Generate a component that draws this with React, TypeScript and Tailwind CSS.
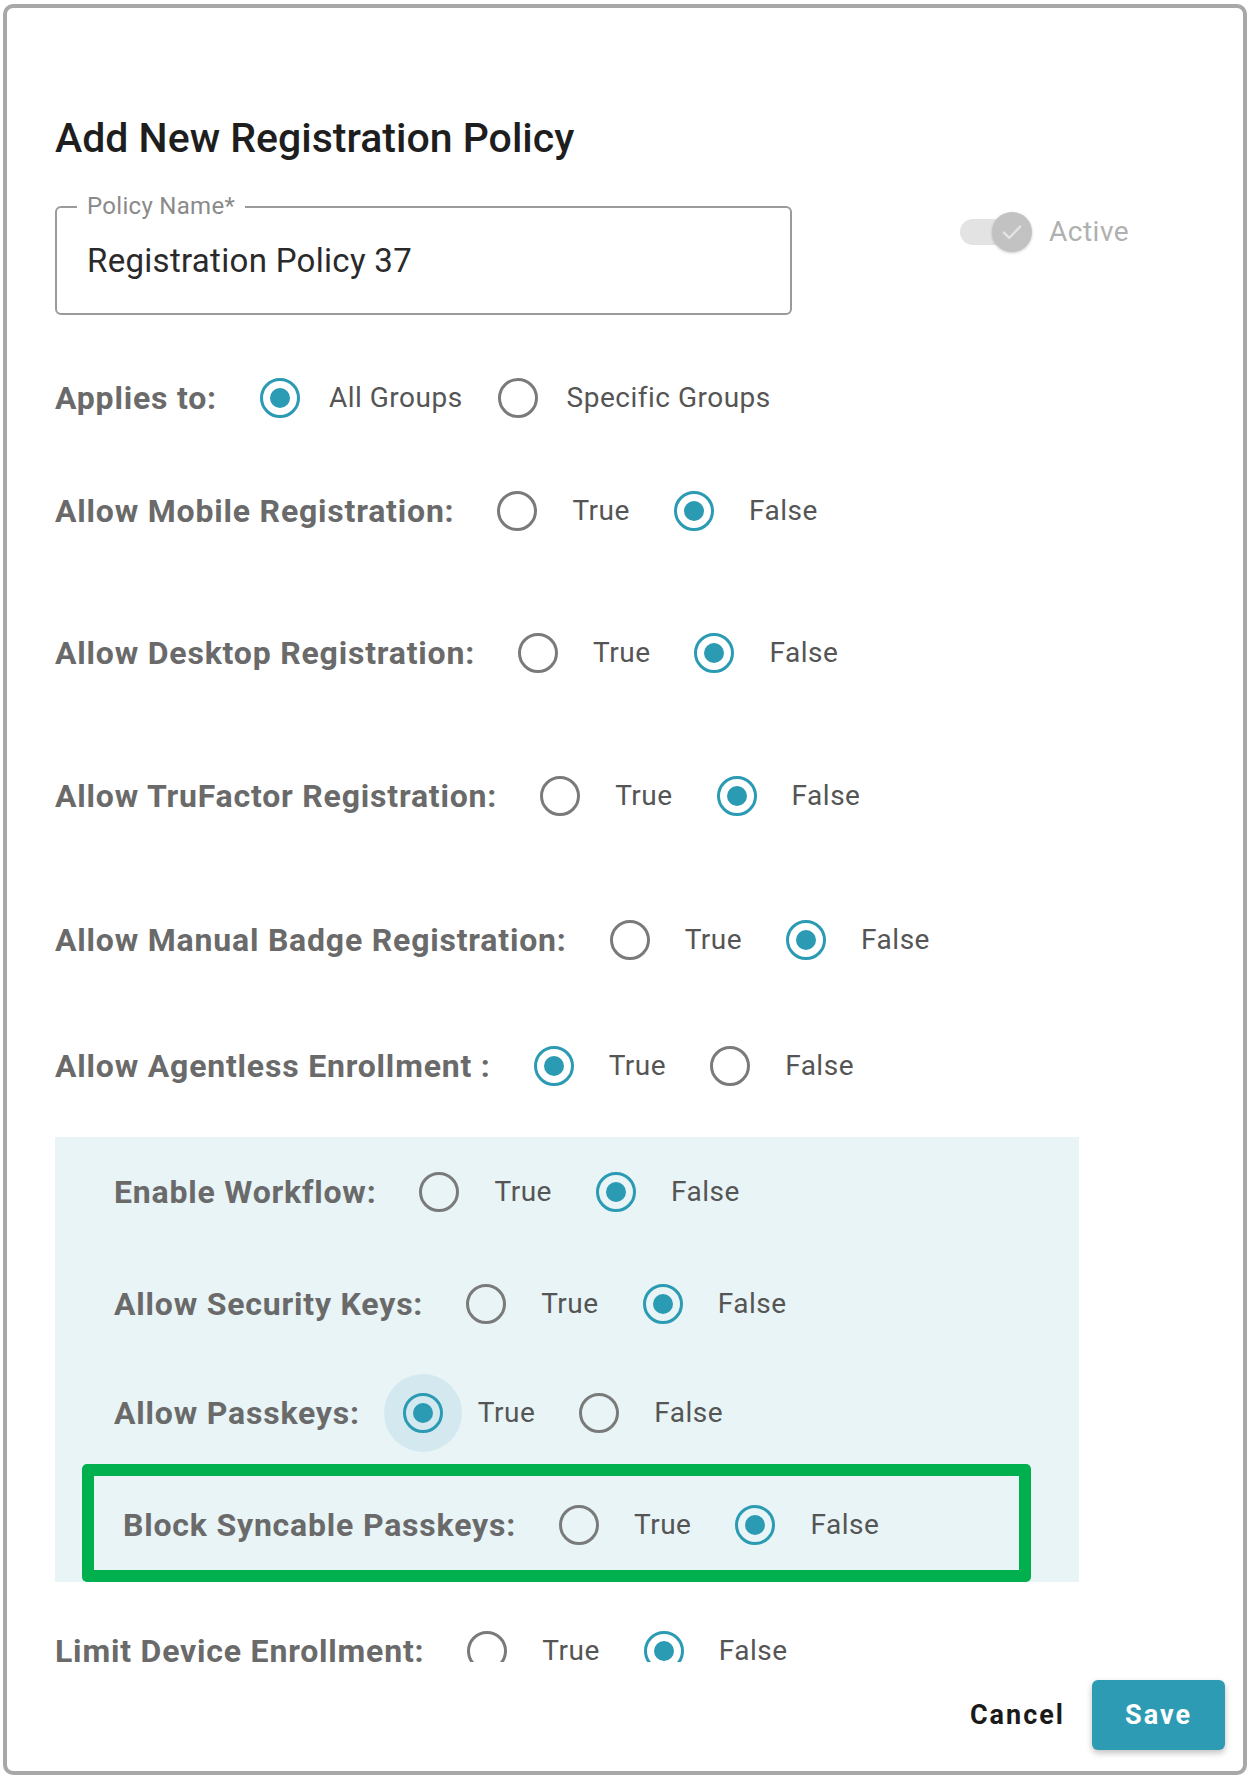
import React from "react";

const Radio = ({ checked, halo }: { checked: boolean; halo?: boolean }) => (
  <span className="relative flex items-center justify-center w-[40px] h-[40px] shrink-0">
    {halo && <span className="absolute -inset-[19px] rounded-full bg-[#d3e9ef]" />}
    <span
      className={`relative flex items-center justify-center w-[40px] h-[40px] rounded-full border-[3px] ${
        checked ? "border-[#2b9ab3]" : "border-[#7a7a7a]"
      }`}
    >
      {checked && <span className="w-[20px] h-[20px] rounded-full bg-[#2b9ab3]" />}
    </span>
  </span>
);

type Opt = { text: string; checked: boolean; halo?: boolean };

const RadioRow = ({
  label,
  options,
  className = "",
  tight,
}: {
  label: string;
  options: Opt[];
  className?: string;
  tight?: boolean;
}) => (
  <div className={`flex items-center h-[44px] ${className}`}>
    <span className="text-[32px] font-bold tracking-[0.8px] text-[#6a6a6a] whitespace-nowrap">{label}</span>
    <div className={`flex items-center ml-[43px] ${tight ? "gap-[35px]" : "gap-[44px]"}`}>
      {options.map((o) => (
        <label key={o.text} className={`flex items-center ${tight ? "gap-[29px]" : "gap-[35px]"}`}>
          <Radio checked={o.checked} halo={o.halo} />
          <span className="text-[28px] tracking-[0.5px] text-[#555555] whitespace-nowrap">{o.text}</span>
        </label>
      ))}
    </div>
  </div>
);

const tf = (v: boolean, halo?: boolean): Opt[] => [
  { text: "True", checked: v, halo: v && halo },
  { text: "False", checked: !v },
];

export default function App() {
  return (
    <div className="w-[1251px] h-[1778px] bg-white relative overflow-hidden pt-[4px] pl-[3px] pr-[4px] pb-[3px] font-['Roboto','Liberation_Sans',sans-serif]">
      <div className="h-full border-[4px] border-[#a8a8a8] rounded-[10px] bg-white flex flex-col overflow-hidden">
        <div className="h-[1654px] overflow-hidden pl-[48px] pt-[107px]">
          <h2 className="text-[41px] leading-[46px] font-medium text-[#1e1e1e]">Add New Registration Policy</h2>

          <div className="flex items-start mt-[45px]">
            <div className="relative w-[737px] h-[109px] border-2 border-[#9a9a9a] rounded-[6px] flex items-center pl-[30px]">
              <span className="absolute -top-[15px] left-[20px] px-[10px] bg-white text-[24px] leading-[26px] tracking-[0.3px] text-[#8a8a8a]">
                Policy Name*
              </span>
              <span className="text-[33px] tracking-[0.3px] text-[#2a2a2a]">Registration Policy 37</span>
            </div>
            <div className="flex items-center ml-[168px] mt-[5px]">
              <div className="relative w-[72px] h-[40px] flex items-center">
                <span className="w-[62px] h-[26px] rounded-full bg-[#e3e3e3]" />
                <span className="absolute right-0 top-0 w-[40px] h-[40px] rounded-full bg-[#c2c2c2] flex items-center justify-center shadow-[0_1px_3px_rgba(0,0,0,0.2)]">
                  <svg width="26" height="26" viewBox="0 0 24 24" fill="none">
                    <path d="M4.5 12.5l5 5L19.5 7" stroke="#e4e4e4" strokeWidth="2.2" strokeLinecap="round" strokeLinejoin="round" />
                  </svg>
                </span>
              </div>
              <span className="ml-[17px] text-[28px] tracking-[0.5px] text-[#b0b0b0]">Active</span>
            </div>
          </div>

          <RadioRow
            className="mt-[61px]"
            tight
            label="Applies to:"
            options={[
              { text: "All Groups", checked: true },
              { text: "Specific Groups", checked: false },
            ]}
          />
          <RadioRow className="mt-[69px]" label="Allow Mobile Registration:" options={tf(false)} />
          <RadioRow className="mt-[98px]" label="Allow Desktop Registration:" options={tf(false)} />
          <RadioRow className="mt-[99px]" label="Allow TruFactor Registration:" options={tf(false)} />
          <RadioRow className="mt-[100px]" label="Allow Manual Badge Registration:" options={tf(false)} />
          <RadioRow className="mt-[82px]" label="Allow Agentless Enrollment :" options={tf(true)} />

          <div className="mt-[49px] w-[1024px] bg-[#e8f4f6] pt-[33px]">
            <div className="pl-[59px]">
              <RadioRow label="Enable Workflow:" options={tf(false)} />
              <RadioRow className="mt-[68px]" label="Allow Security Keys:" options={tf(false)} />
              <RadioRow className="mt-[65px]" label="Allow Passkeys:" options={tf(true, true)} />
            </div>
            <div className="mt-[29px] ml-[27px] w-[949px] border-[12px] border-[#00b04f] rounded-[5px] pl-[29px] pt-[27px] pb-[23px]">
              <RadioRow label="Block Syncable Passkeys:" options={tf(false)} />
            </div>
          </div>

          <RadioRow className="mt-[47px]" label="Limit Device Enrollment:" options={tf(false)} />
        </div>

        <div className="flex items-center justify-end mt-[18px] pr-[18px]">
          <button className="text-[27px] font-bold tracking-[2px] text-[#1a1a1a] mr-[27px]">Cancel</button>
          <button className="w-[133px] h-[70px] rounded-[6px] bg-[#2e9bb4] text-white text-[27px] font-bold tracking-[2px] shadow-[0_3px_6px_rgba(0,0,0,0.25)]">
            Save
          </button>
        </div>
      </div>
    </div>
  );
}
